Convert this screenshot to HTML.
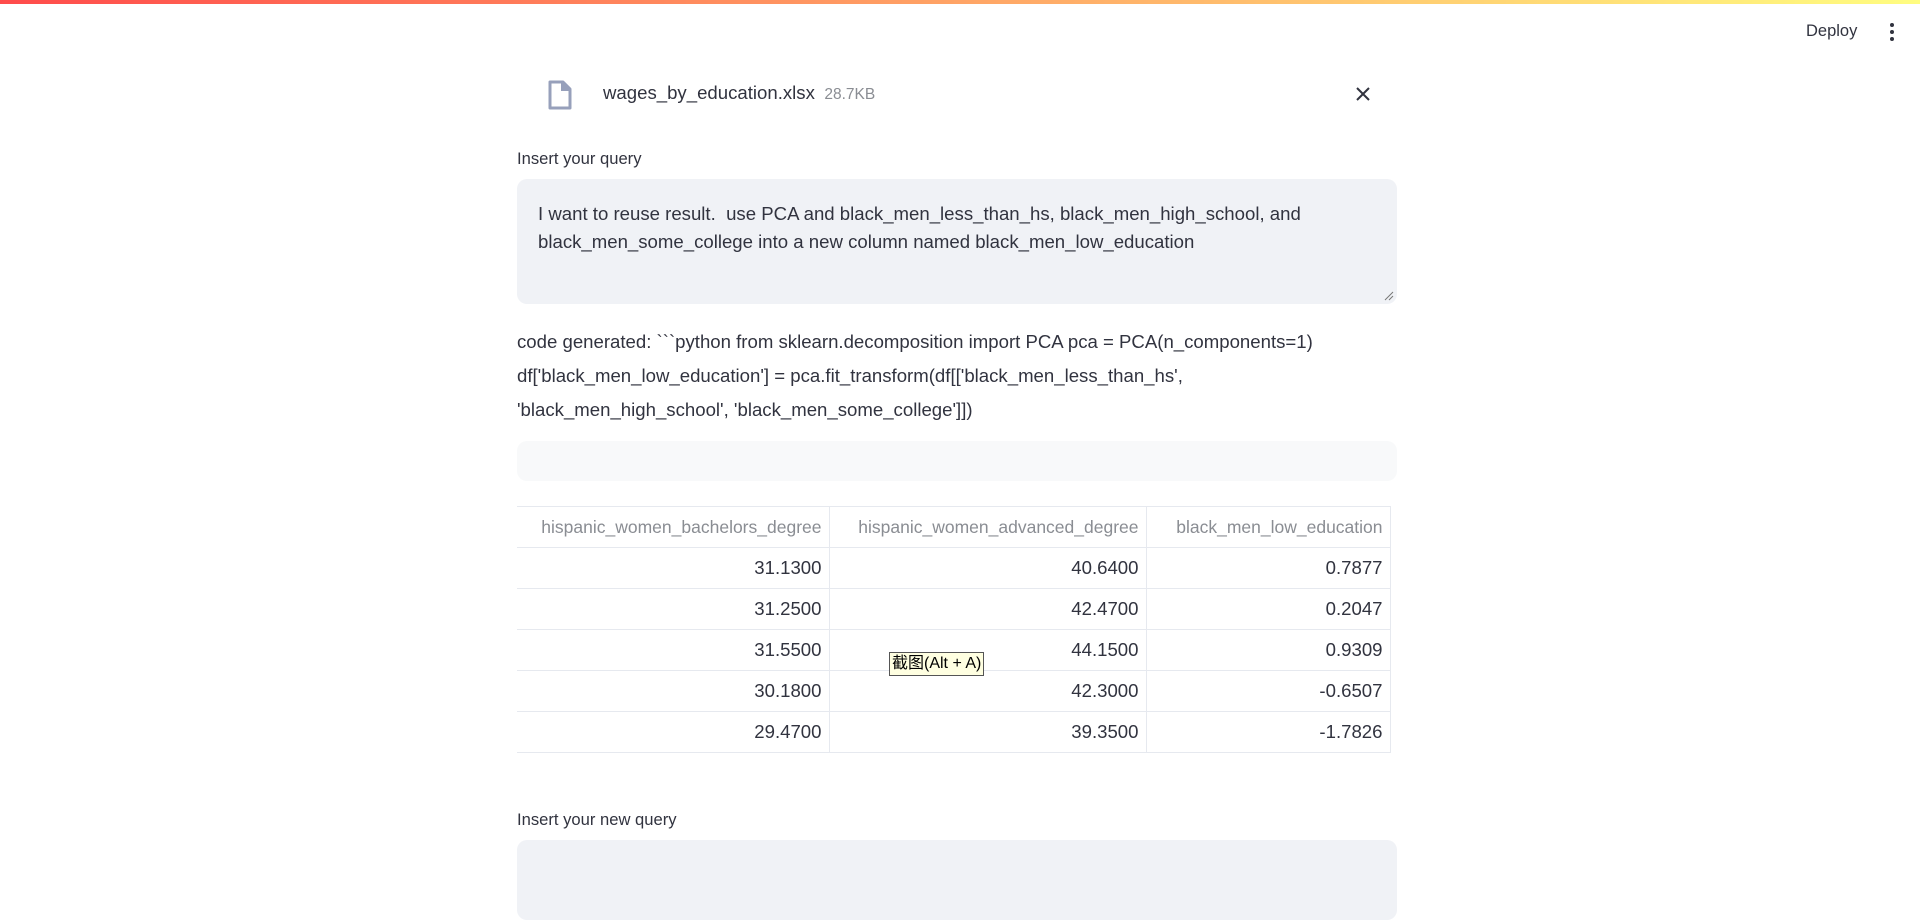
<!DOCTYPE html>
<html><head><meta charset="utf-8"><style>
*{box-sizing:border-box;margin:0;padding:0}
body{width:1920px;height:895px;overflow:hidden;background:#fff;font-family:"Liberation Sans","Noto Sans CJK SC",sans-serif;color:#31333f;position:relative}
.bar{position:absolute;left:0;top:0;width:1920px;height:4px;background:linear-gradient(90deg,#ff4b4b,#fffd80)}
.abs{position:absolute;white-space:nowrap}
.ta{position:absolute;left:517px;width:880px;background:#f0f2f6;border-radius:10px}
table{position:absolute;left:517px;top:506px;border-collapse:collapse;font-size:18.6px}
td,th{border:1px solid #e6e9ef;height:41px;text-align:right;padding:0 7px;font-weight:normal;white-space:nowrap}
th{color:#8a8d93;font-size:17.5px}
tr td:first-child,tr th:first-child{border-left:none}
</style></head><body>
<div class="bar"></div>
<div class="abs" style="left:1806px;top:22px;font-size:16.5px">Deploy</div>
<svg class="abs" style="left:1886px;top:21px" width="12" height="22"><circle cx="6" cy="4" r="2" fill="#31333f"/><circle cx="6" cy="11" r="2" fill="#31333f"/><circle cx="6" cy="18" r="2" fill="#31333f"/></svg>
<svg class="abs" style="left:547px;top:80px" width="26" height="31"><path d="M3 2 H16 L23 9 V28 H3 Z" fill="none" stroke="#97a0bb" stroke-width="3" stroke-linejoin="round"/><path d="M15 2 V10 H23" fill="#97a0bb" stroke="#97a0bb" stroke-width="2"/></svg>
<div class="abs" style="left:603px;top:82px;font-size:18.6px">wages_by_education.xlsx <span style="font-size:15.5px;color:#8a8d93">&nbsp;28.7KB</span></div>
<svg class="abs" style="left:1355px;top:86px" width="16" height="16"><path d="M2 2L14 14M14 2L2 14" stroke="#31333f" stroke-width="2"/></svg>
<div class="abs" style="left:517px;top:149px;font-size:16.6px">Insert your query</div>
<div class="ta" style="top:179px;height:125px"><div style="padding:21px 21px;font-size:18.6px;line-height:28px;width:860px">I want to reuse result.&nbsp; use PCA and black_men_less_than_hs, black_men_high_school, and black_men_some_college into a new column named black_men_low_education</div>
<svg style="position:absolute;right:3px;bottom:3px" width="10" height="10"><path d="M9 1L1 9M9 5L5 9" stroke="#777" stroke-width="1"/></svg></div>
<div class="abs" style="left:517px;top:325px;font-size:18.6px;line-height:34px;white-space:normal;width:880px">code generated: &#96;&#96;&#96;python from sklearn.decomposition import PCA pca = PCA(n_components=1) df['black_men_low_education'] = pca.fit_transform(df[['black_men_less_than_hs', 'black_men_high_school', 'black_men_some_college']])</div>
<div class="abs" style="left:517px;top:441px;width:880px;height:40px;background:#f8f9fa;border-radius:10px"></div>
<table>
<tr><th style="width:312px">hispanic_women_bachelors_degree</th><th style="width:317px">hispanic_women_advanced_degree</th><th style="width:244px">black_men_low_education</th></tr>
<tr><td>31.1300</td><td>40.6400</td><td>0.7877</td></tr>
<tr><td>31.2500</td><td>42.4700</td><td>0.2047</td></tr>
<tr><td>31.5500</td><td>44.1500</td><td>0.9309</td></tr>
<tr><td>30.1800</td><td>42.3000</td><td>-0.6507</td></tr>
<tr><td>29.4700</td><td>39.3500</td><td>-1.7826</td></tr>
</table>
<div class="abs" style="left:889px;top:652px;height:24px;padding:0 2px;background:#ffffe1;border:1px solid #555;font-size:16px;line-height:22px;color:#000">截图(Alt + A)</div>
<div class="abs" style="left:517px;top:810px;font-size:16.6px">Insert your new query</div>
<div class="ta" style="top:840px;height:80px"></div>
</body></html>
